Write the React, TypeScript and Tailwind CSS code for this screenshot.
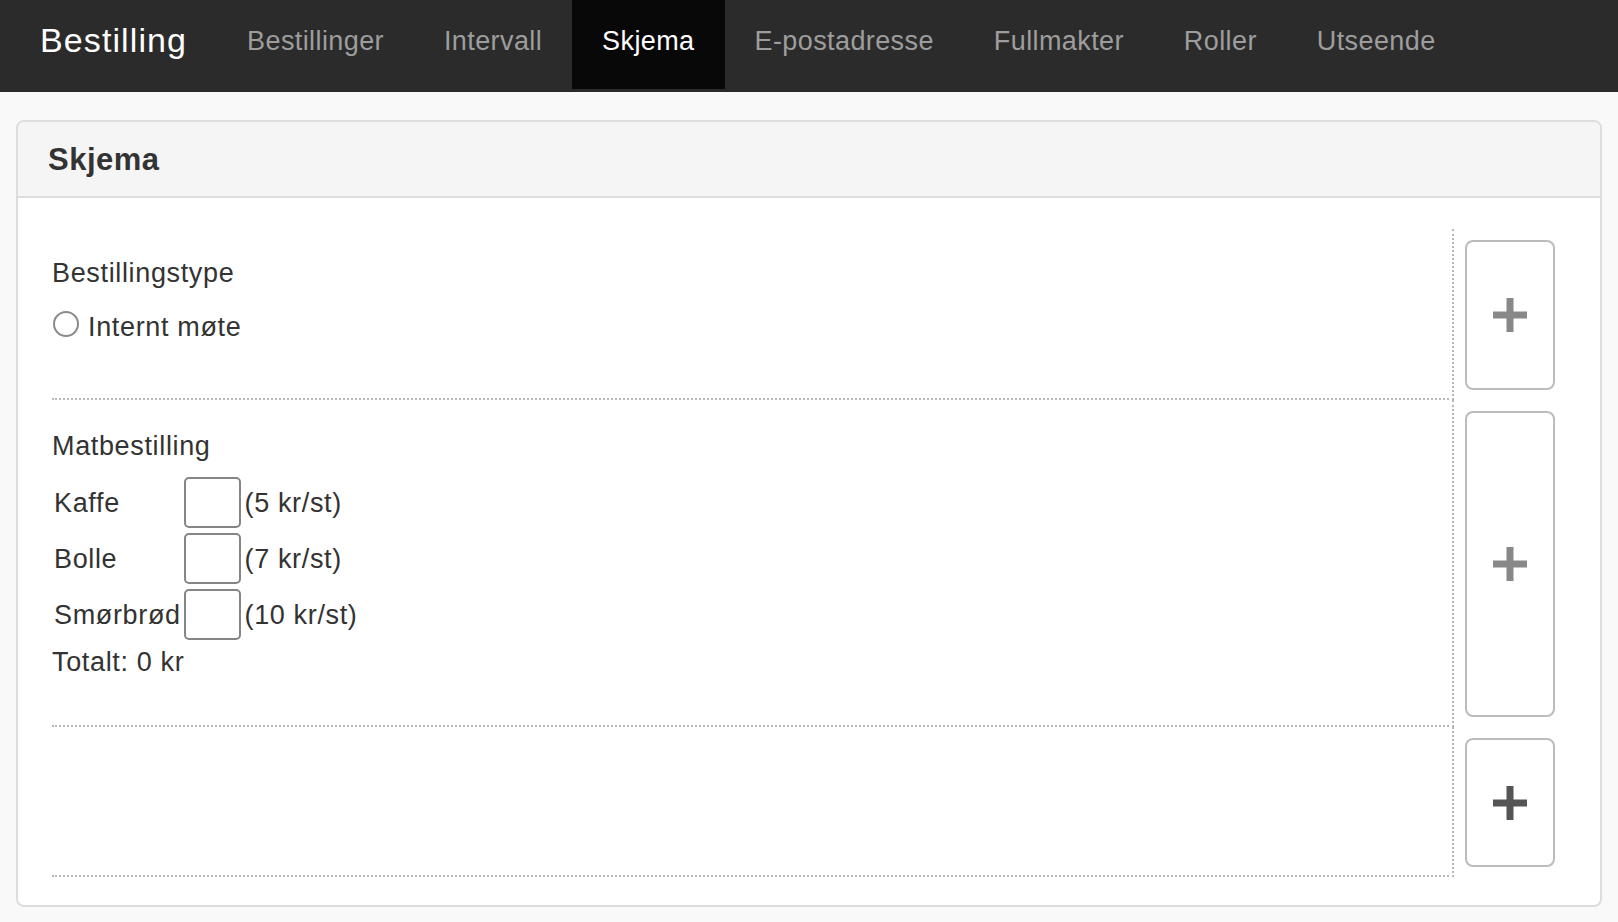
import React from "react";

function Plus({ color }: { color: string }) {
  return (
    <svg width="34" height="34" viewBox="0 0 34 34" aria-hidden="true">
      <rect x="13.5" y="0" width="7" height="34" fill={color} />
      <rect x="0" y="13.5" width="34" height="7" fill={color} />
    </svg>
  );
}

function AddButton({ color }: { color: string }) {
  return (
    <div className="flex h-full w-[90px] items-center justify-center rounded-[8px] border-2 border-[#bcbcbc] bg-white">
      <Plus color={color} />
    </div>
  );
}

function Row({
  children,
  plusColor,
  className,
}: {
  children?: React.ReactNode;
  plusColor: string;
  className: string;
}) {
  return (
    <div className="flex">
      <div className={"mr-[3.5px] flex-1 border-b-2 border-dotted border-[#b8b8b8] " + className}>
        {children}
      </div>
      <div className="flex border-l-2 border-dotted border-[#b8b8b8] pb-[10px] pl-[11px] pt-[11px]">
        <AddButton color={plusColor} />
      </div>
    </div>
  );
}

const items = [
  { name: "Kaffe", price: "(5 kr/st)" },
  { name: "Bolle", price: "(7 kr/st)" },
  { name: "Smørbrød", price: "(10 kr/st)" },
];

export default function App() {
  const links = ["Bestillinger", "Intervall", "Skjema", "E-postadresse", "Fullmakter", "Roller", "Utseende"];
  return (
    <div className="min-h-screen bg-[#f9f9f9] font-['Liberation_Sans',Arial,sans-serif] text-[#333]">
      <nav className="flex h-[92px] items-start bg-[#2b2b2b]">
        <a className="h-[89px] pl-[40px] pr-[30px] pt-[16px] text-[34px] leading-[48px] tracking-[1.1px] text-white">
          Bestilling
        </a>
        {links.map((l) => (
          <a
            key={l}
            className={
              "h-[89px] px-[30px] pt-[21px] text-[27px] leading-[40px] tracking-[0.4px] " +
              (l === "Skjema" ? "bg-[#080808] text-white" : "text-[#9d9d9d]")
            }
          >
            {l}
          </a>
        ))}
      </nav>

      <div className="px-4 pt-[28px]">
        <div className="overflow-hidden rounded-[8px] border-2 border-[#dddddd] bg-white">
          <div className="h-[76px] border-b-2 border-[#dddddd] bg-[#f5f5f5] pl-[30px] pt-[18px]">
            <h3 className="text-[31px] font-bold leading-[40px] tracking-[0.5px] text-[#333]">Skjema</h3>
          </div>
          <div className="pb-[28px] pl-[34px] pr-[45px] pt-[31px] text-[27px] leading-[40px] tracking-[0.65px]">
            <Row plusColor="#888888" className="pb-[51px] pt-[24px]">
              <div>Bestillingstype</div>
              <label className="mt-[14px] flex items-start">
                <span className="ml-[1px] mt-[4px] h-[26px] w-[26px] rounded-full border-2 border-[#8a8a8a] bg-white" />
                <span className="ml-[9px]">Internt møte</span>
              </label>
            </Row>

            <Row plusColor="#888888" className="pb-[43px] pt-[26px]">
              <div>Matbestilling</div>
              <div className="mt-[11px] grid grid-cols-[132px_57px_auto] gap-y-[5px]">
                {items.map((it) => (
                  <React.Fragment key={it.name}>
                    <div className="flex h-[51px] items-center pl-[2px]">{it.name}</div>
                    <div className="h-[51px] w-[57px] rounded-[5px] border-2 border-[#858585] bg-white" />
                    <div className="ml-[3.5px] flex h-[51px] items-center">{it.price}</div>
                  </React.Fragment>
                ))}
              </div>
              <div className="mt-[2px]">Totalt: 0 kr</div>
            </Row>

            <Row plusColor="#555555" className="h-[150px]" />
          </div>
        </div>
      </div>
    </div>
  );
}
